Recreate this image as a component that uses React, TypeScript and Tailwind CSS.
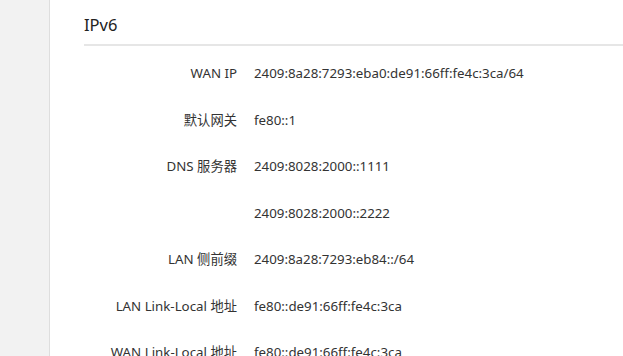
const rows: [string, string][] = [
  ["WAN IP", "2409:8a28:7293:eba0:de91:66ff:fe4c:3ca/64"],
  ["默认网关", "fe80::1"],
  ["DNS 服务器", "2409:8028:2000::1111"],
  ["", "2409:8028:2000::2222"],
  ["LAN 侧前缀", "2409:8a28:7293:eb84::/64"],
  ["LAN Link-Local 地址", "fe80::de91:66ff:fe4c:3ca"],
  ["WAN Link-Local 地址", "fe80::de91:66ff:fe4c:3ca"],
];

export default function App() {
  return (
    <div
      className="flex w-[623px] h-[356px] overflow-hidden bg-white text-[#333]"
      style={{ fontFamily: '"Noto Sans", "Noto Sans CJK SC", sans-serif' }}
    >
      <div className="w-[50px] shrink-0 bg-[#f2f2f2] border-r border-[#dedede]" />
      <div className="flex-1 pl-[34px]">
        <div className="h-[46px] border-b-2 border-[#e6e6e6] pt-[14px] text-[16.5px] leading-[22px] text-[#222]">
          IPv6
        </div>
        <div className="mt-[5px]">
          {rows.map(([label, value], i) => (
            <div key={i} className="flex h-[46.5px] items-center text-[13.3px]">
              <div className="w-[153px] text-right">{label}</div>
              <div className="pl-[17px]">{value}</div>
            </div>
          ))}
        </div>
      </div>
    </div>
  );
}
